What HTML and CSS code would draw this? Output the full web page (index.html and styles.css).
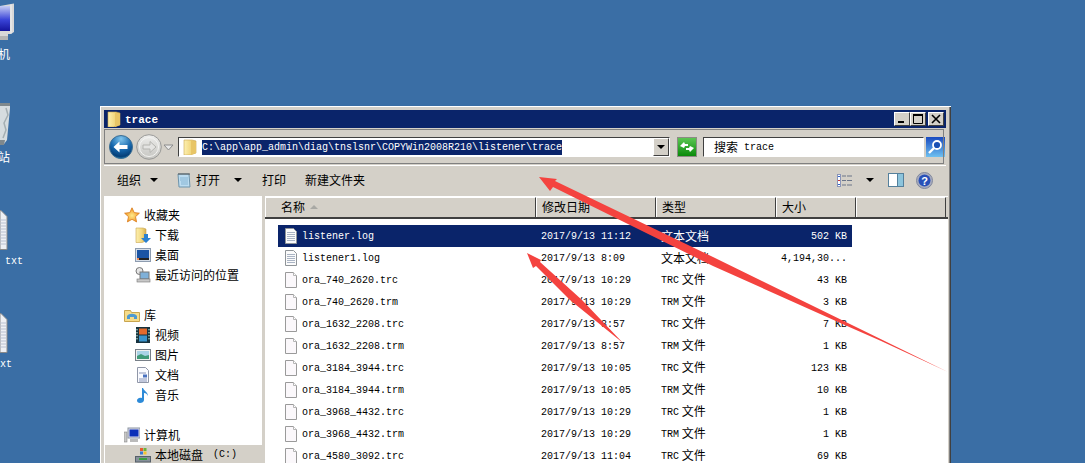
FILE: index.html
```html
<!DOCTYPE HTML>
<html>
<head>
<meta charset="utf-8">
<title>trace</title>
<link rel="stylesheet" href="styles.css">
</head>
<body>

<svg class="sprite" width="0" height="0">
  <defs>
    <linearGradient id="gFolder" x1="0" y1="0" x2="1" y2="0"><stop offset="0" stop-color="#fdf0b0"/><stop offset="0.6" stop-color="#f1d67c"/><stop offset="1" stop-color="#d3ac4e"/></linearGradient>
    <radialGradient id="gBack" cx="0.5" cy="0.15" r="0.95"><stop offset="0" stop-color="#7fc4ec"/><stop offset="0.5" stop-color="#1567ad"/><stop offset="0.8" stop-color="#063f78"/><stop offset="1" stop-color="#14a0d8"/></radialGradient>
    <linearGradient id="gForward" x1="0" y1="0" x2="0" y2="1"><stop offset="0" stop-color="#eeeeec"/><stop offset="1" stop-color="#c4c4c0"/></linearGradient>
    <linearGradient id="gGreen" x1="0" y1="0" x2="0" y2="1"><stop offset="0" stop-color="#5cc653"/><stop offset="1" stop-color="#0a8a0a"/></linearGradient>
    <linearGradient id="gSearch" x1="0" y1="0" x2="0" y2="1"><stop offset="0" stop-color="#1a4bc0"/><stop offset="1" stop-color="#6ec0f0"/></linearGradient>
    <radialGradient id="gStar" cx="0.5" cy="0.55" r="0.55"><stop offset="0" stop-color="#ffe98a"/><stop offset="1" stop-color="#f0921e"/></radialGradient>
    <linearGradient id="gScreen" x1="0" y1="0" x2="0" y2="1"><stop offset="0" stop-color="#c4ccf4"/><stop offset="0.55" stop-color="#3a44d8"/><stop offset="1" stop-color="#14149c"/></linearGradient>

    <symbol id="i-folder" viewBox="0 0 16 16">
      <path d="M2 1h8l4 1v12l-6 2H2z" fill="url(#gFolder)" stroke="#c9a54e" stroke-width=".6"/>
      <path d="M9 1.500l5 1v11.500l-5 2z" fill="#e8c566"/>
    </symbol>
    <symbol id="i-doc" viewBox="0 0 16 16">
      <path d="M2.500 .5h8l3 3v12h-11z" fill="#fbf8fb" stroke="#9a9a9a"/>
      <path d="M10.500 .5v3h3" fill="#fff" stroke="#b5b5b5"/>
    </symbol>
    <symbol id="i-log" viewBox="0 0 16 16">
      <path d="M2.500 .5h8l3 3v12h-11z" fill="#fbfbfb" stroke="#8f9498"/>
      <path d="M4 4.500h8M4 6.500h8M4 8.500h8M4 10.500h8M4 12.500h8" stroke="#aab4c4"/>
    </symbol>
    <symbol id="i-note" viewBox="0 0 16 16">
      <path d="M2 2h11l1 13H3z" fill="#bcdcf0" stroke="#6d94ac"/>
      <path d="M3 1v2M5 1v2M7 1v2M9 1v2M11 1v2M13 1v2" stroke="#555"/>
      <path d="M4 6h8M4 8h8M5 10h7M5 12h7" stroke="#86b4d2"/>
    </symbol>
    <symbol id="i-star" viewBox="0 0 16 16">
      <path d="M8 .8l2.200 4.800 5.200.6-3.900 3.500 1.100 5.200L8 12.300l-4.600 2.600 1.100-5.200L.6 6.200l5.200-.6z" fill="url(#gStar)" stroke="#d97a1a" stroke-width=".8"/>
    </symbol>
    <symbol id="i-download" viewBox="0 0 16 16">
      <path d="M1 1h7l3 1v12l-4 1.500H1z" fill="url(#gFolder)" stroke="#c9a54e" stroke-width=".6"/>
      <path d="M9 7h4v4h3l-5 5-5-5h3z" fill="#2a80d0"/>
    </symbol>
    <symbol id="i-desktop" viewBox="0 0 16 16">
      <rect x=".5" y="1.500" width="15" height="13" fill="#d6dee8" stroke="#8d9cb0"/>
      <rect x="2" y="3" width="12" height="8" fill="#1a54a4"/>
      <rect x="2" y="11" width="12" height="2" fill="#222"/>
      <rect x="2" y="11" width="2" height="2" fill="#e85"/>
    </symbol>
    <symbol id="i-recent" viewBox="0 0 16 16">
      <circle cx="4.500" cy="4" r="3.500" fill="#e6e6e6" stroke="#777"/>
      <rect x="5" y="5" width="9" height="7" fill="#7fb0d8" stroke="#777"/>
      <rect x="2" y="12" width="13" height="3" fill="#c8c8c8" stroke="#777" stroke-width=".6"/>
    </symbol>
    <symbol id="i-lib" viewBox="0 0 16 16">
      <path d="M.5 3.500h6l1 2h8v9h-15z" fill="#f6dc8a" stroke="#c9a54e"/>
      <path d="M3 9c2-3 8-3 10 0v3H10v-2H6v2H3z" fill="#4f9ad0"/>
    </symbol>
    <symbol id="i-video" viewBox="0 0 16 16">
      <rect x="1" y="0" width="14" height="16" fill="#17323e"/>
      <rect x="4" y="1.500" width="8" height="6" fill="#e46a2c"/>
      <rect x="4" y="8.500" width="8" height="6" fill="#3b94cc"/>
      <path d="M2 2v12M14 2v12" stroke="#cfe" stroke-dasharray="1.400 1.600"/>
    </symbol>
    <symbol id="i-picture" viewBox="0 0 16 16">
      <rect x=".5" y="2.500" width="15" height="11" fill="#f0f0f0" stroke="#777f88"/>
      <rect x="2" y="4" width="12" height="8" fill="#a9d3e6"/>
      <path d="M2 9l4-2 4 2 4-1v4H2z" fill="#3f9a78"/>
    </symbol>
    <symbol id="i-docs" viewBox="0 0 16 16">
      <path d="M2.500 .5h8l3 3v12h-11z" fill="#fafbff" stroke="#9097a8"/>
      <path d="M4 6h7M4 12h8M4 14h8" stroke="#8894b8"/>
      <rect x="8" y="7.500" width="4" height="3" fill="#4a72c0"/>
    </symbol>
    <symbol id="i-music" viewBox="0 0 16 16">
      <path d="M8 1c1 3 5 4 5 8-1-2-2-3-4-3v7c0 2-2 3-4 3s-3-1-3-2.500S4 10 7 11V1z" fill="#2c8ad8"/>
    </symbol>
    <symbol id="i-computer" viewBox="0 0 16 16">
      <rect x="0" y="5" width="3" height="10" fill="#c8c8c8" stroke="#777" stroke-width=".5"/>
      <rect x="4" y="1" width="12" height="10" fill="#dde" stroke="#8a93a0"/>
      <rect x="5.500" y="2.500" width="9" height="7" fill="#0c30b8"/>
      <rect x="6" y="12" width="8" height="3" fill="#bbb"/>
    </symbol>
    <symbol id="i-disk" viewBox="0 0 16 16">
      <rect x=".5" y="9.500" width="15" height="5.500" fill="#86909a" stroke="#56606a"/>
      <rect x="4" y="11" width="8" height="2" fill="#3aa040"/>
      <rect x="5" y="1" width="3" height="3" fill="#e85a2c"/>
      <rect x="8.500" y="1" width="3" height="3" fill="#6cb23a"/>
      <rect x="5" y="4.500" width="3" height="3" fill="#3a78d4"/>
      <rect x="8.500" y="4.500" width="3" height="3" fill="#f4c430"/>
    </symbol>
    <symbol id="i-monitor" viewBox="0 0 14 42">
      <path d="M0 6l11-2 3-0.500V32l-3 2-3 0v6H0z" fill="#d8d8d8"/>
      <rect x="0" y="6" width="10" height="25" fill="url(#gScreen)"/>
      <path d="M11 4.500v29" stroke="#f2f2f2"/>
      <path d="M0 36h8v4H0z" fill="#b4b4b4"/>
    </symbol>
    <symbol id="i-bin" viewBox="0 0 11 44">
      <path d="M0 2h10v4L7 38l-3 4H0z" fill="#d6dcdf"/>
      <path d="M0 1h10v3H0z" fill="#7f888c"/>
      <path d="M6 6l2 7-4 8 2 7-3 8" fill="none" stroke="#a4aeb2" stroke-width="1.500"/>
      <path d="M0 38h5l-1 5H0z" fill="#7f888c"/>
    </symbol>
    <symbol id="i-txt" viewBox="0 0 8 40">
      <path d="M0 .5h1l6 6v33H0z" fill="#eef0f4" stroke="#8a8a8a"/>
      <path d="M0 10h6M0 13h6M0 16h6M0 19h6M0 22h6M0 25h6M0 28h6M0 31h6M0 34h6" stroke="#b8c0d0"/>
    </symbol>
  </defs>
</svg>

<!-- desktop -->
<svg class="dicon dicon-pc"><use href="#i-monitor"/></svg>
<span class="dlabel dlabel-pc">机</span>
<svg class="dicon dicon-bin"><use href="#i-bin"/></svg>
<span class="dlabel dlabel-bin">站</span>
<svg class="dicon dicon-txt1"><use href="#i-txt"/></svg>
<span class="dlabel dlabel-txt1 m">txt</span>
<svg class="dicon dicon-txt2"><use href="#i-txt"/></svg>
<span class="dlabel dlabel-txt2 m">xt</span>

<div class="window">
  <div class="titlebar">
    <svg class="ico"><use href="#i-folder"/></svg>
    <span class="title">trace</span>
    <div class="wbtns">
      <span class="wbtn"><svg width="14" height="12"><rect x="3" y="8" width="6" height="2" fill="#000"/></svg></span>
      <span class="wbtn"><svg width="14" height="12"><path d="M2.500 2.500h9v8h-9z" fill="none" stroke="#000"/><rect x="2" y="1" width="10" height="2" fill="#000"/></svg></span>
      <span class="wbtn wbtn-close"><svg width="14" height="12"><path d="M3 2l8 8M11 2l-8 8" stroke="#000" stroke-width="1.600"/></svg></span>
    </div>
  </div>

  <div class="addrband">
    <div class="navbtns">
      <svg width="24" height="24" viewBox="0 0 24 24"><circle cx="12" cy="12" r="11.500" fill="url(#gBack)" stroke="#3d6f94"/><path d="M4.500 12l6-5.500v3.500h8v4h-8v3.500z" fill="#fff"/></svg>
      <svg width="26" height="26" viewBox="0 0 26 26"><circle cx="13" cy="13" r="12.300" fill="url(#gForward)" stroke="#9a9a98"/><circle cx="13" cy="13" r="9.500" fill="none" stroke="#f4f4f2"/><path d="M20 13l-6-5.500V11H7v4h7v3.500z" fill="#e4e4e2" stroke="#b4b4b0"/></svg>
      <svg class="hist" width="11" height="7"><path d="M1 1h9L5.500 6z" fill="#e8e8e8" stroke="#8c8c8c"/></svg>
    </div>
    <div class="addr">
      <svg class="ico"><use href="#i-folder"/></svg>
      <span class="addrtext m">C:\app\app_admin\diag\tnslsnr\COPYWin2008R210\listener\trace</span>
      <span class="combo"><i class="tri"></i></span>
    </div>
    <span class="go"><svg width="18" height="18" viewBox="0 0 18 18"><rect width="18" height="18" fill="url(#gGreen)"/><path d="M2 8l4-4 1 2h3v2H7l-1 2zM16 10l-4 4-1-2H8v-2h3l1-2z" fill="#fff"/></svg></span>
    <div class="search"><span>搜索</span><span class="m search-term">trace</span></div>
    <span class="searchbtn"><svg width="19" height="20" viewBox="0 0 19 20"><rect width="19" height="20" fill="url(#gSearch)"/><circle cx="11" cy="8" r="4" fill="#1a50b4" stroke="#fff" stroke-width="1.800"/><path d="M8 11l-5 5" stroke="#fff" stroke-width="2.400"/></svg></span>
  </div>

  <div class="toolbar">
    <span class="tool tool-org">组织<i class="tri"></i></span>
    <span class="tool tool-open"><svg class="ico"><use href="#i-note"/></svg>打开<i class="tri"></i></span>
    <span class="tool tool-print">打印</span>
    <span class="tool tool-new">新建文件夹</span>
    <div class="toolright">
      <svg width="15" height="13" viewBox="0 0 15 13"><rect x=".5" y=".5" width="3" height="12" fill="#fff" stroke="#8a94b8"/><path d="M1 2.500h2" stroke="#36c"/><path d="M1 6.500h2" stroke="#c33"/><path d="M1 10.500h2" stroke="#36c"/><path d="M5 2h4M10 2h5M5 6.500h4M10 6.500h5M5 11h4M10 11h5" stroke="#6a7488"/></svg>
      <i class="tri tri-views"></i>
      <svg class="pane" width="16" height="14" viewBox="0 0 16 14"><rect x=".5" y=".5" width="15" height="13" fill="#fff" stroke="#55809c"/><rect x="10" y="1" width="5" height="12" fill="#8cc4dc"/><path d="M9.500 1v12" stroke="#55809c"/></svg>
      <svg width="17" height="17" viewBox="0 0 17 17"><circle cx="8.500" cy="8.500" r="8" fill="#a8acc0" stroke="#80889c"/><circle cx="8.500" cy="8.500" r="6" fill="#2850b8"/><text x="8.500" y="12.500" class="qmark">?</text></svg>
    </div>
  </div>

  <div class="panes">
    <div class="navpane">
      <div class="navitem group"><svg class="ico"><use href="#i-star"/></svg>收藏夹</div>
      <div class="navitem"><svg class="ico"><use href="#i-download"/></svg>下载</div>
      <div class="navitem"><svg class="ico"><use href="#i-desktop"/></svg>桌面</div>
      <div class="navitem"><svg class="ico"><use href="#i-recent"/></svg>最近访问的位置</div>
      <div class="navitem group spaced"><svg class="ico"><use href="#i-lib"/></svg>库</div>
      <div class="navitem"><svg class="ico"><use href="#i-video"/></svg>视频</div>
      <div class="navitem"><svg class="ico"><use href="#i-picture"/></svg>图片</div>
      <div class="navitem"><svg class="ico"><use href="#i-docs"/></svg>文档</div>
      <div class="navitem"><svg class="ico"><use href="#i-music"/></svg>音乐</div>
      <div class="navitem group spaced"><svg class="ico"><use href="#i-computer"/></svg>计算机</div>
      <div class="navitem current"><svg class="ico"><use href="#i-disk"/></svg>本地磁盘<span class="m drive">(C:)</span></div>
    </div>

    <div class="filepane">
      <div class="colhead">
        <span class="hcell hcell-name">名称<i class="sortup"></i></span>
        <span class="hcell hcell-date">修改日期</span>
        <span class="hcell hcell-type">类型</span>
        <span class="hcell hcell-size">大小</span>
        <span class="hcell hcell-rest"></span>
      </div>
      <div class="files">
        <div class="file selected"><svg class="ico"><use href="#i-log"/></svg><span class="m name">listener.log</span><span class="m">2017/9/13 11:12</span><span class="type">文本文档</span><span class="m size">502 KB</span></div>
        <div class="file"><svg class="ico"><use href="#i-log"/></svg><span class="m name">listener1.log</span><span class="m">2017/9/13 8:09</span><span class="type">文本文档</span><span class="m size">4,194,30...</span></div>
        <div class="file"><svg class="ico"><use href="#i-doc"/></svg><span class="m name">ora_740_2620.trc</span><span class="m">2017/9/13 10:29</span><span class="type"><span class="m">TRC</span> 文件</span><span class="m size">43 KB</span></div>
        <div class="file"><svg class="ico"><use href="#i-doc"/></svg><span class="m name">ora_740_2620.trm</span><span class="m">2017/9/13 10:29</span><span class="type"><span class="m">TRM</span> 文件</span><span class="m size">3 KB</span></div>
        <div class="file"><svg class="ico"><use href="#i-doc"/></svg><span class="m name">ora_1632_2208.trc</span><span class="m">2017/9/13 8:57</span><span class="type"><span class="m">TRC</span> 文件</span><span class="m size">7 KB</span></div>
        <div class="file"><svg class="ico"><use href="#i-doc"/></svg><span class="m name">ora_1632_2208.trm</span><span class="m">2017/9/13 8:57</span><span class="type"><span class="m">TRM</span> 文件</span><span class="m size">1 KB</span></div>
        <div class="file"><svg class="ico"><use href="#i-doc"/></svg><span class="m name">ora_3184_3944.trc</span><span class="m">2017/9/13 10:05</span><span class="type"><span class="m">TRC</span> 文件</span><span class="m size">123 KB</span></div>
        <div class="file"><svg class="ico"><use href="#i-doc"/></svg><span class="m name">ora_3184_3944.trm</span><span class="m">2017/9/13 10:05</span><span class="type"><span class="m">TRM</span> 文件</span><span class="m size">10 KB</span></div>
        <div class="file"><svg class="ico"><use href="#i-doc"/></svg><span class="m name">ora_3968_4432.trc</span><span class="m">2017/9/13 10:29</span><span class="type"><span class="m">TRC</span> 文件</span><span class="m size">1 KB</span></div>
        <div class="file"><svg class="ico"><use href="#i-doc"/></svg><span class="m name">ora_3968_4432.trm</span><span class="m">2017/9/13 10:29</span><span class="type"><span class="m">TRM</span> 文件</span><span class="m size">1 KB</span></div>
        <div class="file"><svg class="ico"><use href="#i-doc"/></svg><span class="m name">ora_4580_3092.trc</span><span class="m">2017/9/13 11:04</span><span class="type"><span class="m">TRC</span> 文件</span><span class="m size">69 KB</span></div>
      </div>
    </div>
  </div>
</div>

<!-- red arrows drawn over the screenshot -->
<svg class="arrows" width="1085" height="463" viewBox="0 0 1085 463">
  <path d="M539 177L557 179L555 181L713 257L948 372L880 340.500L847 326L713 266L553 187L550 191Z" fill="#f4433f"/>
  <path d="M527 253L541 260L540 262L582 300L623 343L570 300L536 266L533 268Z" fill="#f4433f"/>
</svg>

</body>
</html>
```
FILE: styles.css
```css
html, body {
    margin: 0;
    height: 463px;
    overflow: hidden;
}
body {
    position: relative;
    background: #3a6ea5;
    font: 12px/16px "Noto Sans CJK SC", "Liberation Sans", sans-serif;
    color: #000;
}
.m {
    font-family: "Liberation Mono", monospace;
    font-size: 10px;
}
.sprite {
    position: absolute;
}
.ico {
    width: 16px;
    height: 16px;
    flex: none;
}
.tri {
    display: inline-block;
    width: 0;
    height: 0;
    border: 4px solid transparent;
    border-top-color: #000;
    border-bottom-width: 0;
}

/* desktop */
.dicon {
    position: absolute;
    left: 0;
}
.dicon-pc { top: 0; width: 14px; height: 42px; }
.dicon-bin { top: 102px; width: 11px; height: 44px; }
.dicon-txt1 { top: 210px; width: 8px; height: 40px; }
.dicon-txt2 { top: 313px; width: 8px; height: 40px; }
.dlabel {
    position: absolute;
    color: #fff;
}
.dlabel-pc { left: -2px; top: 46px; }
.dlabel-bin { left: -2px; top: 149px; }
.dlabel-txt1 { left: 5px; top: 254px; }
.dlabel-txt2 { left: 0; top: 357px; }

/* window */
.window {
    position: absolute;
    left: 100px;
    top: 106px;
    width: 851px;
    height: 372px;
    box-sizing: border-box;
    padding: 4px 3px 0 4px;
    background: #d4d0c8;
    box-shadow: inset 1px 1px #fff, inset -1px 0 #404040, inset -2px 0 #808080;
    display: flex;
    flex-direction: column;
}
.titlebar {
    height: 18px;
    flex: none;
    margin-right: 2px;
    background: #0a246a;
    display: flex;
    align-items: center;
    padding: 0 2px;
}
.title {
    margin-left: 3px;
    padding-top: 2px;
    color: #fff;
    font: bold 11px "Liberation Mono", monospace;
}
.wbtns {
    margin-left: auto;
    display: flex;
}
.wbtn {
    width: 16px;
    height: 14px;
    box-sizing: border-box;
    background: #d4d0c8;
    border: 1px solid;
    border-color: #fff #404040 #404040 #fff;
    display: flex;
}
.wbtn-close {
    margin-left: 2px;
}

/* address band */
.addrband {
    height: 35px;
    flex: none;
    box-sizing: border-box;
    margin: 1px 4px 0 0;
    border: 1px solid;
    border-color: #808080 #fff #808080 #fff;
    outline: 1px solid #808080;
    outline-offset: -1px;
    display: flex;
    align-items: center;
    padding: 1px 0 0 4px;
}
.navbtns {
    display: flex;
    align-items: center;
    width: 69px;
    flex: none;
}
.navbtns svg + svg {
    margin-left: 3px;
}
.navbtns .hist {
    margin-left: 1px;
}
.addr {
    width: 492px;
    height: 20px;
    box-sizing: border-box;
    flex: none;
    background: #fff;
    border: 1px solid;
    border-color: #404040 #fff #fff #404040;
    display: flex;
    align-items: center;
    padding-left: 3px;
}
.addrtext {
    margin-left: 4px;
    padding-top: 1px;
    background: #0a246a;
    color: #fff;
    line-height: 14px;
}
.combo {
    margin-left: auto;
    width: 16px;
    height: 18px;
    box-sizing: border-box;
    background: #d4d0c8;
    border: 1px solid;
    border-color: #fff #404040 #404040 #fff;
    display: flex;
    align-items: center;
    justify-content: center;
}
.go {
    margin-left: 7px;
    width: 20px;
    height: 20px;
    box-sizing: border-box;
    flex: none;
    border: 1px solid #8c8c84;
    display: flex;
}
.search {
    margin-left: 6px;
    width: 221px;
    height: 20px;
    box-sizing: border-box;
    flex: none;
    background: #fff;
    border: 1px solid;
    border-color: #404040 #fff #fff #404040;
    padding-left: 10px;
    display: flex;
    align-items: center;
}
.search-term {
    margin-left: 6px;
    padding-top: 2px;
}
.searchbtn {
    margin-left: 2px;
    display: flex;
}

/* toolbar */
.toolbar {
    height: 31px;
    flex: none;
    box-sizing: border-box;
    margin-top: 1px;
    margin-right: 2px;
    padding-bottom: 2px;
    border-top: 1px solid #fff;
    display: flex;
    align-items: center;
}
.tool {
    display: flex;
    align-items: center;
}
.tool .ico {
    margin-right: 4px;
}
.tool .tri {
    margin-left: 9px;
}
.tool-org { margin-left: 13px; }
.tool-open { margin-left: 18px; }
.tool-open .tri { margin-left: 14px; }
.tool-print { margin-left: 20px; }
.tool-new { margin-left: 19px; }
.toolright {
    margin-left: auto;
    margin-right: 13px;
    display: flex;
    align-items: center;
}
.tri-views {
    margin-left: 14px;
}
.pane {
    margin-left: 14px;
}
.toolright .pane + svg {
    margin-left: 12px;
}
.qmark {
    fill: #fff;
    font: bold 11px "Liberation Sans", sans-serif;
    text-anchor: middle;
}

/* panes */
.panes {
    flex: 1;
    display: flex;
    min-height: 0;
}
.navpane {
    width: 158px;
    flex: none;
    background: #fff;
    padding-top: 9px;
    box-sizing: border-box;
}
.navitem {
    height: 20px;
    display: flex;
    align-items: center;
    gap: 4px;
    padding-left: 31px;
}
.navitem.group {
    padding-left: 20px;
}
.navitem.spaced {
    margin-top: 20px;
}
.navitem.current {
    margin-left: 1px;
    padding-left: 30px;
    background: #d4d0c8;
}
.drive {
    margin-left: 6px;
}
.filepane {
    margin-left: 3px;
    width: 683px;
    flex: none;
    background: #fff;
    display: flex;
    flex-direction: column;
}
.colhead {
    height: 22px;
    flex: none;
    box-sizing: border-box;
    background: #d4d0c8;
    border-bottom: 2px solid #404040;
    display: flex;
    margin-top: 1px;
}
.hcell {
    height: 20px;
    box-sizing: border-box;
    flex: none;
    border-top: 1px solid #fff;
    border-left: 1px solid #fff;
    border-right: 1px solid #404040;
    padding: 0 0 2px 5px;
    display: flex;
    align-items: center;
}
.hcell-name { width: 271px; padding-left: 15px; }
.hcell-date { width: 120px; }
.hcell-type { width: 120px; }
.hcell-size { width: 80px; }
.hcell-rest { width: 90px; }
.sortup {
    margin-left: 5px;
    width: 0;
    height: 0;
    border: 4px solid transparent;
    border-bottom-color: #a8a8a4;
    border-top-width: 0;
}
.files {
    padding: 6px 0 0 13px;
}
.file {
    width: 574px;
    height: 22px;
    display: grid;
    grid-template-columns: 24px 239px 120px 120px 71px;
    align-items: center;
}
.file .ico {
    margin-left: 5px;
}
.file > .m {
    padding-top: 2px;
}
.file .type .m {
    vertical-align: 1px;
}
.file .size {
    text-align: right;
    padding-right: 5px;
}
.file.selected {
    background: #0a246a;
    color: #fff;
}

.arrows {
    position: absolute;
    left: 0;
    top: 0;
    pointer-events: none;
}
```
